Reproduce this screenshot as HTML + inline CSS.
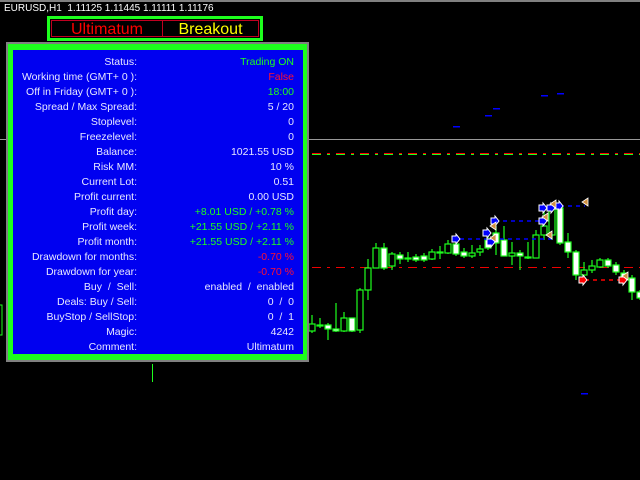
<!DOCTYPE html>
<html><head><meta charset="utf-8"><style>
*{margin:0;padding:0}
body{width:640px;height:480px;background:#000;position:relative;overflow:hidden;font-family:"Liberation Sans",Arial,sans-serif}
.t{position:absolute;left:4px;top:3px;color:#fff;font-size:10px}
#hdr{position:absolute;left:47px;top:16px;width:210px;height:19px;border:3px solid #1dff1d;background:#000}
#hdr .in{position:absolute;left:1px;top:1px;right:1px;bottom:1px;border:1px solid #c00020}
#hdr .a{position:absolute;left:0;top:0;width:110px;height:100%;border-right:1px solid #c00020;color:#f00;font-size:16px;text-align:center;line-height:17px}
#hdr .b{position:absolute;left:111px;top:0;right:0;height:100%;color:#ff0;font-size:16px;text-align:center;line-height:17px}
#pan{position:absolute;left:6px;top:42px;width:303px;height:320px;background:#808080}
#grn{position:absolute;left:2px;top:2px;width:299px;height:316px;background:#1dff1d}
#blu{position:absolute;left:5px;top:6px;width:290px;height:304px;background:#0000f0}
.r{position:absolute;left:0;width:290px;height:15px;font-size:10.5px;color:#e8e8ff}
.r .l{position:absolute;right:166px;top:0;white-space:nowrap}
.r .v{position:absolute;right:9px;top:0;white-space:nowrap}
.g{color:#1dff1d!important}.red{color:#ff1030!important}
</style></head><body>
<svg width="640" height="480" style="position:absolute;left:0;top:0">
<line x1="0" y1="1" x2="640" y2="1" stroke="#fff" stroke-width="1"/>
<line x1="0" y1="139.5" x2="640" y2="139.5" stroke="#999" stroke-width="1"/>
<line x1="312" y1="153.5" x2="640" y2="153.5" stroke="#f00" stroke-dasharray="9,6,3,6"/>
<line x1="312" y1="154.5" x2="640" y2="154.5" stroke="#1dff1d" stroke-dasharray="9,6,3,6"/>
<line x1="312" y1="267.5" x2="640" y2="267.5" stroke="#e00" stroke-dasharray="9,6,3,6"/>
<g fill="#00f"><rect x="453" y="126" width="7" height="1.5"/><rect x="485" y="115" width="7" height="1.5"/><rect x="493" y="108" width="7" height="1.5"/><rect x="541" y="95" width="7" height="1.5"/><rect x="557" y="93" width="7" height="1.5"/><rect x="581" y="393" width="7" height="1.5"/></g>
<g stroke="#1dff1d" stroke-width="1">
<line x1="152.5" y1="364" x2="152.5" y2="382"/>
<rect x="-3" y="305" width="5" height="30" fill="#000"/>
</g>
<g id="c" stroke="#1dff1d" stroke-width="1.2"></g>
<g stroke-width="1.5" stroke-dasharray="4,4">
<line x1="460" y1="239" x2="552" y2="239" stroke="#00f"/>
<line x1="495" y1="221" x2="540" y2="221" stroke="#00f"/>
<line x1="560" y1="206" x2="585" y2="206" stroke="#00f"/>
<line x1="585" y1="280" x2="625" y2="280" stroke="#f00"/>
</g>
<g stroke="#fff" stroke-width="1">
<polygon points="452,236 456,236 456,234 460,239 456,244 456,242 452,242" fill="#00f"/>
<polygon points="487,239 491,239 491,237 495,242 491,247 491,245 487,245" fill="#00f"/>
<polygon points="483,230 487,230 487,228 491,233 487,238 487,236 483,236" fill="#00f"/>
<polygon points="491,218 495,218 495,216 499,221 495,226 495,224 491,224" fill="#00f"/>
<polygon points="539,218 543,218 543,216 547,221 543,226 543,224 539,224" fill="#00f"/>
<polygon points="539,205 543,205 543,203 547,208 543,213 543,211 539,211" fill="#00f"/>
<polygon points="547,205 551,205 551,203 555,208 551,213 551,211 547,211" fill="#00f"/>
<polygon points="555,203 559,203 559,201 563,206 559,211 559,209 555,209" fill="#00f"/>
<polygon points="579,277 583,277 583,275 587,280 583,285 583,283 579,283" fill="#f00"/>
<polygon points="619,277 623,277 623,275 627,280 623,285 623,283 619,283" fill="#f00"/>
</g>
<g fill="#d09040" stroke="#fff" stroke-width="0.8">
<polygon points="496,242 490,238 496,234"/><polygon points="552,239 546,235 552,231"/><polygon points="496,230 490,226 496,222"/><polygon points="548,221 542,217 548,213"/><polygon points="556,208 550,204 556,200"/><polygon points="588,206 582,202 588,198"/><polygon points="628,280 622,276 628,272"/>
</g>
</svg>
<div class="t">EURUSD,H1&nbsp; 1.11125 1.11445 1.11111 1.11176</div>
<div id="hdr"><div class="in"><div class="a">Ultimatum</div><div class="b">Breakout</div></div></div>
<div id="pan"><div id="grn"><div id="blu">
<div class="r" style="top:6px"><span class="l">Status:</span><span class="v g">Trading ON</span></div>
<div class="r" style="top:21px"><span class="l">Working time (GMT+ 0 ):</span><span class="v red">False</span></div>
<div class="r" style="top:36px"><span class="l">Off in Friday (GMT+ 0 ):</span><span class="v g">18:00</span></div>
<div class="r" style="top:51px"><span class="l">Spread / Max Spread:</span><span class="v">5 / 20</span></div>
<div class="r" style="top:66px"><span class="l">Stoplevel:</span><span class="v">0</span></div>
<div class="r" style="top:81px"><span class="l">Freezelevel:</span><span class="v">0</span></div>
<div class="r" style="top:96px"><span class="l">Balance:</span><span class="v">1021.55 USD</span></div>
<div class="r" style="top:111px"><span class="l">Risk MM:</span><span class="v">10 %</span></div>
<div class="r" style="top:126px"><span class="l">Current Lot:</span><span class="v">0.51</span></div>
<div class="r" style="top:141px"><span class="l">Profit current:</span><span class="v">0.00 USD</span></div>
<div class="r" style="top:156px"><span class="l">Profit day:</span><span class="v g">+8.01 USD / +0.78 %</span></div>
<div class="r" style="top:171px"><span class="l">Profit week:</span><span class="v g">+21.55 USD / +2.11 %</span></div>
<div class="r" style="top:186px"><span class="l">Profit month:</span><span class="v g">+21.55 USD / +2.11 %</span></div>
<div class="r" style="top:201px"><span class="l">Drawdown for months:</span><span class="v red">-0.70 %</span></div>
<div class="r" style="top:216px"><span class="l">Drawdown for year:</span><span class="v red">-0.70 %</span></div>
<div class="r" style="top:231px"><span class="l">Buy &nbsp;/ &nbsp;Sell:</span><span class="v">enabled &nbsp;/ &nbsp;enabled</span></div>
<div class="r" style="top:246px"><span class="l">Deals: Buy / Sell:</span><span class="v">0 &nbsp;/ &nbsp;0</span></div>
<div class="r" style="top:261px"><span class="l">BuyStop / SellStop:</span><span class="v">0 &nbsp;/ &nbsp;1</span></div>
<div class="r" style="top:276px"><span class="l">Magic:</span><span class="v">4242</span></div>
<div class="r" style="top:291px"><span class="l">Comment:</span><span class="v">Ultimatum</span></div>
</div></div></div>
<script>
var d=[[312,324,331,315,333,0],[320,325,326,318,328,1],[328,325,329,323,340,1],[336,329,331,303,332,1],[344,318,331,312,332,0],[352,318,331,318,332,1],[360,290,330,288,333,0],[368,268,290,259,300,0],[376,248,268,243,268,0],[384,248,268,243,270,1],[392,254,266,252,270,0],[400,255,259,252,264,1],[408,258,259,252,262,1],[416,257,260,254,262,1],[424,256,260,253,262,1],[432,252,259,249,260,0],[440,252,253,246,259,1],[448,244,253,240,254,0],[456,244,254,242,256,1],[464,252,256,248,258,1],[472,253,256,245,258,0],[480,249,252,245,256,0],[488,240,248,230,250,1],[496,233,243,226,255,1],[504,240,256,226,256,1],[512,253,256,242,265,0],[520,253,256,250,270,1],[528,257,258,242,259,1],[536,235,258,230,258,0],[544,226,235,210,240,0],[552,208,235,205,240,0],[560,208,243,205,245,1],[568,242,252,233,258,1],[576,252,275,250,280,1],[584,270,275,262,282,0],[592,266,270,260,273,0],[600,260,267,258,268,0],[608,260,266,258,268,1],[616,265,272,262,275,1],[624,273,280,270,282,1],[632,278,292,275,300,1],[640,292,298,290,300,1]];
var s='';d.forEach(function(c){s+='<line x1="'+c[0]+'" y1="'+c[3]+'" x2="'+c[0]+'" y2="'+c[4]+'"/>';s+='<rect x="'+(c[0]-3)+'" y="'+c[1]+'" width="6" height="'+Math.max(1,c[2]-c[1])+'" fill="'+(c[5]?'#fff':'#000')+'"/>';});
document.getElementById('c').innerHTML=s;
</script>
</body></html>
